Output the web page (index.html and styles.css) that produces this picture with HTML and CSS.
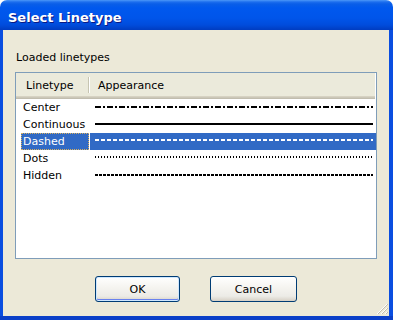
FILE: index.html
```html
<!DOCTYPE html>
<html>
<head>
<meta charset="utf-8">
<link rel="stylesheet" href="styles.css">
</head>
<body>
<div class="window">
  <div class="titlebar"><span class="title">Select Linetype</span></div>
  <div class="frame">
    <div class="client">
      <div class="label">Loaded linetypes</div>
      <div class="listbox">
        <div class="header">
          <div class="hcell hname">Linetype</div>
          <div class="hcell happear">Appearance</div>
        </div>
        <div class="row">
          <div class="name"><span>Center</span></div>
          <div class="appear"><svg><line x1="0" y1="8" x2="100%" y2="8" class="ln center"/></svg></div>
        </div>
        <div class="row">
          <div class="name"><span>Continuous</span></div>
          <div class="appear"><svg><line x1="0" y1="8" x2="100%" y2="8" class="ln"/></svg></div>
        </div>
        <div class="row selected">
          <div class="name"><span>Dashed</span></div>
          <div class="appear"><svg><line x1="0" y1="7" x2="100%" y2="7" class="ln dashed"/></svg></div>
        </div>
        <div class="row">
          <div class="name"><span>Dots</span></div>
          <div class="appear"><svg><line x1="0" y1="7" x2="100%" y2="7" class="ln dots"/></svg></div>
        </div>
        <div class="row">
          <div class="name"><span>Hidden</span></div>
          <div class="appear"><svg><line x1="0" y1="8" x2="100%" y2="8" class="ln hidden"/></svg></div>
        </div>
      </div>
      <div class="buttons">
        <button class="btn btn-ok">OK</button>
        <button class="btn btn-cancel">Cancel</button>
      </div>
      <svg class="grip" width="12" height="12" viewBox="0 0 12 12">
        <g stroke-width="1">
          <line x1="11" y1="1" x2="1" y2="11" stroke="#ffffff"/>
          <line x1="12" y1="1" x2="2" y2="11" stroke="#C1BDAE"/>
          <line x1="11" y1="5" x2="5" y2="11" stroke="#ffffff"/>
          <line x1="12" y1="5" x2="6" y2="11" stroke="#C1BDAE"/>
          <line x1="11" y1="9" x2="9" y2="11" stroke="#ffffff"/>
          <line x1="12" y1="9" x2="10" y2="11" stroke="#C1BDAE"/>
        </g>
      </svg>
    </div>
  </div>
</div>
</body>
</html>
```

FILE: styles.css
```css
html, body {
  margin: 0;
  padding: 0;
}
body {
  width: 393px;
  height: 320px;
  overflow: hidden;
  background: #ffffff;
  font-family: "DejaVu Sans", Tahoma, sans-serif;
  font-size: 11px;
  color: #000;
}
.window {
  width: 393px;
  height: 320px;
  display: flex;
  flex-direction: column;
  border-radius: 7px 7px 0 0;
  overflow: hidden;
}
.titlebar {
  height: 30px;
  flex: none;
  display: flex;
  align-items: center;
  padding: 5px 0 0 8px;
  box-sizing: border-box;
  background: linear-gradient(to bottom,
    #4C98F8 0px, #1C6EEE 2px, #0A5EE8 4px, #0058EE 8px,
    #0055EA 18px, #004CDC 25px, #003CC0 30px);
}
.title {
  color: #ffffff;
  font-weight: bold;
  font-size: 13px;
  text-shadow: 1px 1px #0A1883;
}
.frame {
  flex: 1;
  display: flex;
  padding: 0 4px 4px 3px;
  background: #0A4EE0;
  box-shadow: inset 0 -4px #0A3FC8;
}
.client {
  flex: 1;
  position: relative;
  background: #ECE9D8;
  padding: 21px 12px 0 12px;
  display: flex;
  flex-direction: column;
}
.label {
  line-height: 14px;
  height: 14px;
  padding-left: 1px;
}
.listbox {
  margin-top: 7px;
  width: 362px;
  height: 187px;
  box-sizing: border-box;
  border: 1px solid #7F9DB9;
  background: #ffffff;
  flex: none;
}
.header {
  display: flex;
  height: 26px;
  margin-right: 1px;
  background: linear-gradient(to bottom,
    #EBEADB 0, #EBEADB 23px,
    #D6D2C2 23px, #D6D2C2 24px,
    #CBC7B8 24px, #CBC7B8 25px,
    #C1BDAE 25px, #C1BDAE 26px);
}
.hcell {
  box-sizing: border-box;
  padding-top: 3px;
  line-height: 20px;
  height: 23px;
}
.hname {
  width: 73px;
  padding-left: 10px;
  position: relative;
}
.hname::after {
  content: "";
  position: absolute;
  right: 0;
  top: 4px;
  bottom: 3px;
  width: 1px;
  background: #C7C5B2;
  box-shadow: 1px 0 #ffffff;
}
.happear {
  flex: 1;
  padding-left: 9px;
}
.row {
  display: flex;
  height: 17px;
  line-height: 17px;
}
.name {
  width: 73px;
  flex: none;
  display: flex;
}
.name span {
  margin-left: 5px;
  width: 68px;
  padding-left: 2px;
  box-sizing: border-box;
  white-space: nowrap;
}
.appear {
  flex: 1;
  margin-left: 1px;
  padding: 0 3px 0 5px;
}
.appear svg {
  display: block;
  width: 100%;
  height: 17px;
}
.ln {
  stroke: #000;
  stroke-width: 2;
  shape-rendering: crispEdges;
}
.ln.center { stroke-dasharray: 6 2 2 2; }
.ln.dashed { stroke-dasharray: 4 2; stroke: #ffffff; }
.ln.dots { stroke-dasharray: 1 2; }
.ln.hidden { stroke-dasharray: 3 1; }
.row.selected .name span {
  background: #316AC5;
  color: #ffffff;
  outline: 1px dotted #D8B060;
  outline-offset: -1px;
}
.row.selected .appear {
  background: #316AC5;
}
.buttons {
  margin-top: 17px;
  display: flex;
  justify-content: center;
  gap: 30px;
}
.btn {
  height: 26px;
  box-sizing: border-box;
  border: 1px solid #003C74;
  border-radius: 3px;
  font-family: "DejaVu Sans", Tahoma, sans-serif;
  font-size: 11px;
  color: #000;
  padding: 0;
  background: linear-gradient(to bottom, #FFFFFF 0%, #F6F5F1 40%, #ECEBE6 80%, #D6D0C5 100%);
}
.btn-ok {
  width: 85px;
  box-shadow: inset 0 0 0 1px #CEE7FF, inset 0 -1px 0 1px #6982EE;
}
.btn-cancel {
  width: 87px;
}
.grip {
  position: absolute;
  right: 1px;
  bottom: 1px;
}
```
